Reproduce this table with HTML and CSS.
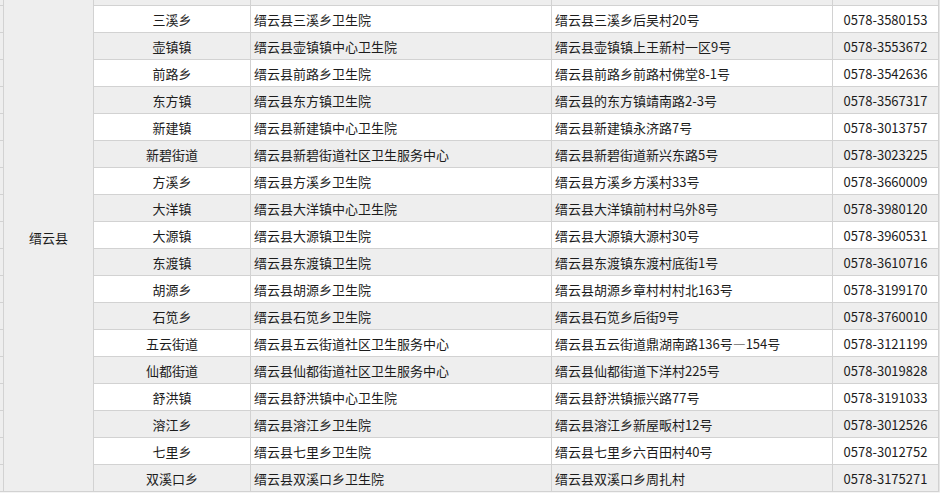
FILE: index.html
```html
<!DOCTYPE html>
<html lang="zh-CN">
<head>
<meta charset="utf-8">
<title>缙云县卫生院</title>
<link rel="stylesheet" href="styles.css">
</head>
<body>
<div class="sheet">
  <div class="county">缙云县</div>

  <div class="row head">
    <div class="edge"></div><div></div><div></div><div></div><div></div>
  </div>

  <div class="row"><div class="edge"></div><div class="town">三溪乡</div><div class="txt">缙云县三溪乡卫生院</div><div class="txt">缙云县三溪乡后吴村20号</div><div class="tel">0578-3580153</div></div>
  <div class="row alt"><div class="edge"></div><div class="town">壶镇镇</div><div class="txt">缙云县壶镇镇中心卫生院</div><div class="txt">缙云县壶镇镇上王新村一区9号</div><div class="tel">0578-3553672</div></div>
  <div class="row"><div class="edge"></div><div class="town">前路乡</div><div class="txt">缙云县前路乡卫生院</div><div class="txt">缙云县前路乡前路村佛堂8-1号</div><div class="tel">0578-3542636</div></div>
  <div class="row alt"><div class="edge"></div><div class="town">东方镇</div><div class="txt">缙云县东方镇卫生院</div><div class="txt">缙云县的东方镇靖南路2-3号</div><div class="tel">0578-3567317</div></div>
  <div class="row"><div class="edge"></div><div class="town">新建镇</div><div class="txt">缙云县新建镇中心卫生院</div><div class="txt">缙云县新建镇永济路7号</div><div class="tel">0578-3013757</div></div>
  <div class="row alt"><div class="edge"></div><div class="town">新碧街道</div><div class="txt">缙云县新碧街道社区卫生服务中心</div><div class="txt">缙云县新碧街道新兴东路5号</div><div class="tel">0578-3023225</div></div>
  <div class="row"><div class="edge"></div><div class="town">方溪乡</div><div class="txt">缙云县方溪乡卫生院</div><div class="txt">缙云县方溪乡方溪村33号</div><div class="tel">0578-3660009</div></div>
  <div class="row alt"><div class="edge"></div><div class="town">大洋镇</div><div class="txt">缙云县大洋镇中心卫生院</div><div class="txt">缙云县大洋镇前村村乌外8号</div><div class="tel">0578-3980120</div></div>
  <div class="row"><div class="edge"></div><div class="town">大源镇</div><div class="txt">缙云县大源镇卫生院</div><div class="txt">缙云县大源镇大源村30号</div><div class="tel">0578-3960531</div></div>
  <div class="row alt"><div class="edge"></div><div class="town">东渡镇</div><div class="txt">缙云县东渡镇卫生院</div><div class="txt">缙云县东渡镇东渡村底街1号</div><div class="tel">0578-3610716</div></div>
  <div class="row"><div class="edge"></div><div class="town">胡源乡</div><div class="txt">缙云县胡源乡卫生院</div><div class="txt">缙云县胡源乡章村村村北163号</div><div class="tel">0578-3199170</div></div>
  <div class="row alt"><div class="edge"></div><div class="town">石笕乡</div><div class="txt">缙云县石笕乡卫生院</div><div class="txt">缙云县石笕乡后街9号</div><div class="tel">0578-3760010</div></div>
  <div class="row"><div class="edge"></div><div class="town">五云街道</div><div class="txt">缙云县五云街道社区卫生服务中心</div><div class="txt">缙云县五云街道鼎湖南路136号—154号</div><div class="tel">0578-3121199</div></div>
  <div class="row alt"><div class="edge"></div><div class="town">仙都街道</div><div class="txt">缙云县仙都街道社区卫生服务中心</div><div class="txt">缙云县仙都街道下洋村225号</div><div class="tel">0578-3019828</div></div>
  <div class="row"><div class="edge"></div><div class="town">舒洪镇</div><div class="txt">缙云县舒洪镇中心卫生院</div><div class="txt">缙云县舒洪镇振兴路77号</div><div class="tel">0578-3191033</div></div>
  <div class="row alt"><div class="edge"></div><div class="town">溶江乡</div><div class="txt">缙云县溶江乡卫生院</div><div class="txt">缙云县溶江乡新屋畈村12号</div><div class="tel">0578-3012526</div></div>
  <div class="row"><div class="edge"></div><div class="town">七里乡</div><div class="txt">缙云县七里乡卫生院</div><div class="txt">缙云县七里乡六百田村40号</div><div class="tel">0578-3012752</div></div>
  <div class="row alt"><div class="edge"></div><div class="town">双溪口乡</div><div class="txt">缙云县双溪口乡卫生院</div><div class="txt">缙云县双溪口乡周扎村</div><div class="tel">0578-3175271</div></div>
</div>
</body>
</html>
```

FILE: styles.css
```css
html, body {
  margin: 0;
  padding: 0;
  background: #f4f4f4;
}

body {
  font-family: "Noto Sans CJK SC", "Noto Sans", sans-serif;
  font-size: 13px;
  color: #1c1c1c;
  overflow: hidden;
}

.sheet {
  display: grid;
  grid-template-columns: 3px 89px 156px 300px 280px 105px;
  grid-template-rows: 5px repeat(18, 26px);
  gap: 1px;
  background: #d2d2d2;
  width: 938px;
  padding-right: 1px;
  padding-bottom: 1px;
  border-right: 1px solid #e6e6e6;
}

.county {
  grid-column: 2;
  grid-row: 1 / -1;
  background: #eeeeee;
  display: flex;
  align-items: center;
  justify-content: center;
  padding-bottom: 16px;
}

.row {
  display: contents;
}

.row > div {
  background: #ffffff;
  box-sizing: border-box;
  padding-top: 2px;
  line-height: 24px;
  white-space: nowrap;
  overflow: hidden;
}

.row.alt > div,
.row.head > div {
  background: #eeeeee;
}

.row.head > div {
  padding: 0;
}

.row > .edge {
  background: #eeeeee;
}

.town {
  text-align: center;
}

.txt {
  padding-left: 3px;
}

.tel {
  text-align: center;
  font-variant-numeric: tabular-nums;
}
```
